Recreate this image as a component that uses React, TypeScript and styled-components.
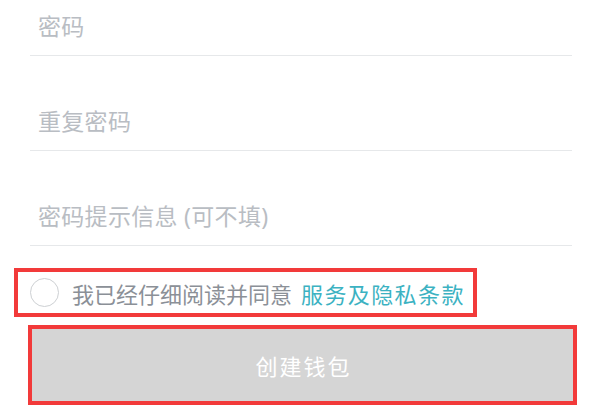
import React from 'react';
import styled, { createGlobalStyle } from 'styled-components';

const GlobalStyle = createGlobalStyle`
  body {
    margin: 0;
    background: #ffffff;
    font-family: 'Noto Sans', 'Noto Sans CJK SC', sans-serif;
    overflow: hidden;
  }
`;

const Page = styled.div`
  width: 600px;
  height: 408px;
  overflow: hidden;
  background: #ffffff;
`;

const Form = styled.div`
  display: flex;
  flex-direction: column;
  margin-top: -38px;
  padding: 0 28px 0 30px;
`;

const Field = styled.div`
  height: 94px;
  display: flex;
  align-items: flex-end;
  padding: 0 0 14px 8px;
  box-sizing: border-box;
  border-bottom: 1px solid #e6e8ea;
  & + & {
    height: 95px;
  }
`;

const Placeholder = styled.span`
  font-size: 23px;
  line-height: 30px;
  letter-spacing: 0.3px;
  color: #b9bdc3;
`;

const Agreement = styled.label`
  display: flex;
  align-items: center;
  gap: 13px;
  width: 463px;
  height: 49px;
  box-sizing: border-box;
  margin: 22px 0 0 14px;
  padding-left: 12px;
  border: 4px solid #f23a3a;
`;

const Radio = styled.span`
  width: 29px;
  height: 29px;
  border-radius: 50%;
  border: 1px solid #cdd0d3;
  box-sizing: border-box;
  flex-shrink: 0;
`;

const AgreeText = styled.span`
  font-size: 22px;
  color: #8b9097;
  white-space: nowrap;
`;

const Terms = styled.span`
  margin-left: 9px;
  font-size: 22px;
  letter-spacing: 1.4px;
  color: #3cb2c2;
`;

const Submit = styled.button`
  display: flex;
  align-items: center;
  justify-content: center;
  width: 549px;
  height: 80px;
  margin: 8px 0 0 28px;
  box-sizing: border-box;
  border: 4px solid #f23a3a;
  background: #d5d5d5;
  color: #ffffff;
  font-family: inherit;
  font-size: 22px;
  letter-spacing: 2px;
  padding: 0 0 0 2px;
`;

const fields = ['密码', '重复密码', '密码提示信息 (可不填)'];

export default function App() {
  return (
    <Page>
      <GlobalStyle />
      <Form>
        {fields.map(f => (
          <Field key={f}>
            <Placeholder>{f}</Placeholder>
          </Field>
        ))}
      </Form>
      <Agreement>
        <Radio />
        <AgreeText>
          我已经仔细阅读并同意
          <Terms>服务及隐私条款</Terms>
        </AgreeText>
      </Agreement>
      <Submit>创建钱包</Submit>
    </Page>
  );
}
